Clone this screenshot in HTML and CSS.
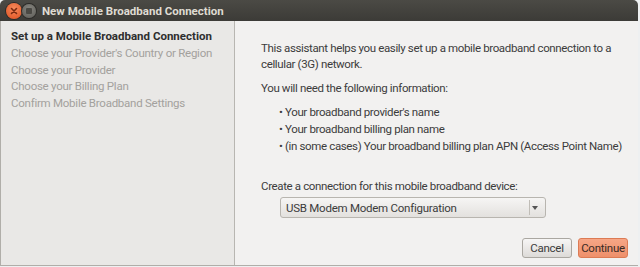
FILE: index.html
```html
<!DOCTYPE html>
<html lang="en">
<head>
  <meta charset="UTF-8" />
  <title>New Mobile Broadband Connection</title>
  <link rel="stylesheet" href="styles.css">
</head>
<body>
  <div class="window">
    <div class="titlebar">
      <span class="btn-close">
        <svg width="8" height="8" viewBox="0 0 8 8"><path d="M1.5 1.5 L6.5 6.5 M6.5 1.5 L1.5 6.5" stroke="#7a2a10" stroke-width="1.6" stroke-linecap="round"/></svg>
      </span>
      <span class="btn-min"><span class="min-square"></span></span>
      <span class="title">New Mobile Broadband Connection</span>
    </div>
    <div class="main">
      <ul class="steps">
        <li class="current">Set up a Mobile Broadband Connection</li>
        <li>Choose your Provider's Country or Region</li>
        <li>Choose your Provider</li>
        <li>Choose your Billing Plan</li>
        <li>Confirm Mobile Broadband Settings</li>
      </ul>
      <div class="page">
        <p class="intro">This assistant helps you easily set up a mobile broadband connection to a<br>cellular (3G) network.</p>
        <p class="need">You will need the following information:</p>
        <ul class="bullets">
          <li>• Your broadband provider's name</li>
          <li>• Your broadband billing plan name</li>
          <li>• (in some cases) Your broadband billing plan APN (Access Point Name)</li>
        </ul>
        <p class="device-label">Create a connection for this mobile broadband device:</p>
        <div class="combo">
          <span class="combo-text">USB Modem Modem Configuration</span>
          <span class="combo-sep"></span>
          <span class="combo-arrow"></span>
        </div>
        <div class="actions">
          <button class="button">Cancel</button>
          <button class="button primary">Continue</button>
        </div>
      </div>
    </div>
  </div>
</body>
</html>
```

FILE: styles.css
```css
body { margin: 0; background: #eef0f1; font-family: Roboto, "Open Sans", sans-serif; font-size: 11.5px; color: #3c3c3c; }
.window { width: 638px; height: 266px; display: flex; flex-direction: column; border-radius: 5px 5px 0 0; overflow: hidden; }
.titlebar { height: 21px; flex: none; display: flex; align-items: center; padding-left: 6px; background: linear-gradient(#4b4a45, #3c3b37); }
.btn-close { width: 16px; height: 16px; border-radius: 50%; background: radial-gradient(circle at 50% 35%, #f58a5c, #e0501f); display: flex; align-items: center; justify-content: center; box-shadow: 0 0 0 1px #2c2b28; }
.btn-min { width: 14px; height: 14px; border-radius: 50%; background: radial-gradient(circle at 50% 35%, #86857f, #5d5c57); display: flex; align-items: center; justify-content: center; box-shadow: 0 0 0 1px #2c2b28; }
.min-square { width: 6px; height: 6px; background: #4a4944; border-radius: 1px; }
.title { margin-left: 6px; color: #dfdbd2; font-weight: bold; }
.main { flex: 1; display: flex; min-width: 0; border-left: 1px solid #b0aea9; border-bottom: 1px solid #b0aea9; }
.steps { width: 223px; flex: none; margin: 0; padding: 7px 0 0 10px; list-style: none; background: #e9e8e6; border-right: 1px solid #b8b6b1; line-height: 16.8px; color: #a3a19d; letter-spacing: -0.25px; white-space: nowrap; overflow: hidden; }
.steps .current { color: #2e2e2e; font-weight: bold; letter-spacing: 0; }
.page { flex: 1; min-width: 0; display: flex; flex-direction: column; padding: 19px 9px 0 26px; background: #f2f1f0; line-height: 16px; letter-spacing: -0.36px; white-space: nowrap; }
.page p { margin: 0; }
.need { margin-top: 8px !important; }
.bullets { list-style: none; margin: 8px 0 0; padding-left: 18px; line-height: 17px; }
.device-label { margin-top: 23px !important; }
.combo { margin: 3px 0 0 19px; width: 264px; height: 19px; display: flex; align-items: center; border: 1px solid #b8b5af; border-radius: 3px; background: linear-gradient(#f6f5f4, #e3e1de); letter-spacing: -0.25px; }
.combo-text { flex: 1; padding-left: 5px; }
.combo-sep { width: 1px; height: 15px; background: #c0bdb7; }
.combo-arrow { width: 0; height: 0; margin: 1px 7px 0 2px; border-left: 3px solid transparent; border-right: 3px solid transparent; border-top: 4px solid #555; }
.actions { margin-top: 20px; padding-right: 1px; display: flex; justify-content: flex-end; gap: 6px; }
.button { font: inherit; letter-spacing: -0.25px; color: #3c3c3c; width: 50px; height: 20px; padding: 0; border: 1px solid #aaa7a1; border-radius: 3px; background: linear-gradient(#f7f6f5, #dddbd8); }
.button.primary { border-color: #dc7b54; background: linear-gradient(#f7a686, #ee906b); color: #3a2a24; }
```
